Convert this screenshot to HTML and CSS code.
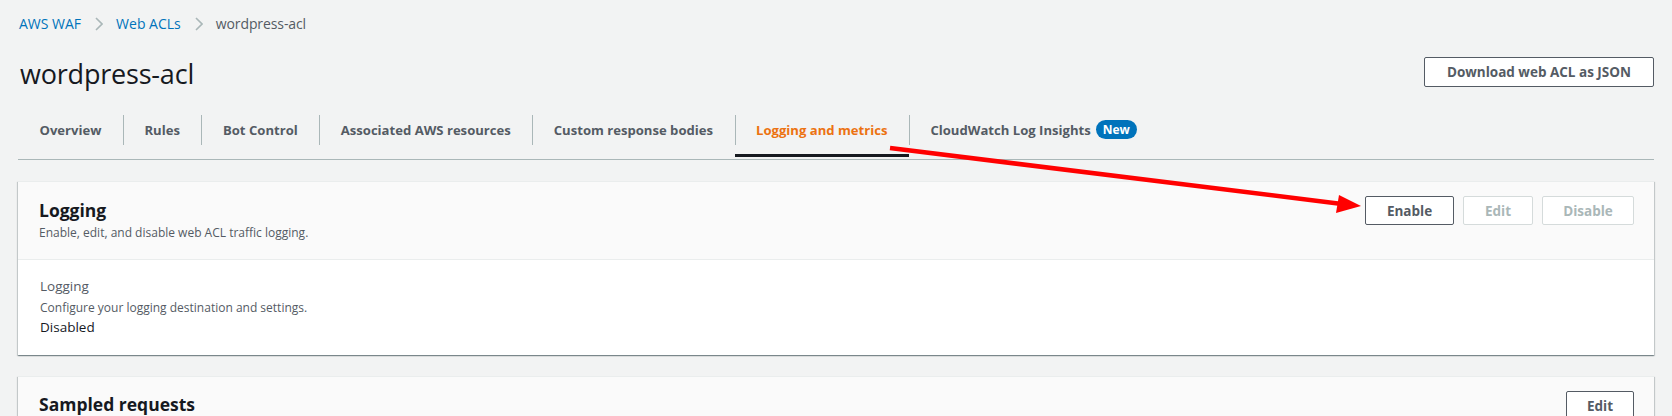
FILE: index.html
```html
<!DOCTYPE html>
<html lang="en">
<head>
<meta charset="utf-8">
<title>wordpress-acl</title>
<link rel="stylesheet" href="styles.css">
</head>
<body>
<div class="page">
  <nav class="breadcrumbs">
    <a class="crumb link">AWS WAF</a>
    <svg class="sep" width="8" height="14" viewBox="0 0 8 14" aria-hidden="true"><polyline points="1,1 7,7 1,13" fill="none" stroke="#aab7b8" stroke-width="1.6"/></svg>
    <a class="crumb link">Web ACLs</a>
    <svg class="sep" width="8" height="14" viewBox="0 0 8 14" aria-hidden="true"><polyline points="1,1 7,7 1,13" fill="none" stroke="#aab7b8" stroke-width="1.6"/></svg>
    <span class="crumb current">wordpress-acl</span>
  </nav>
  <header class="page-header">
    <h1 class="title">wordpress-acl</h1>
    <button class="btn btn-download">Download web ACL as JSON</button>
  </header>
  <div class="tabs">
    <div class="tab">Overview</div>
    <div class="tab">Rules</div>
    <div class="tab">Bot Control</div>
    <div class="tab">Associated AWS resources</div>
    <div class="tab">Custom response bodies</div>
    <div class="tab active">Logging and metrics</div>
    <div class="tab">CloudWatch Log Insights <span class="badge">New</span></div>
  </div>

  <section class="card">
    <div class="card-header">
      <div class="card-titles">
        <h2 class="card-title">Logging</h2>
        <p class="card-desc">Enable, edit, and disable web ACL traffic logging.</p>
      </div>
      <div class="actions">
        <button class="btn btn-sm">Enable</button>
        <button class="btn btn-sm disabled">Edit</button>
        <button class="btn btn-sm disabled">Disable</button>
      </div>
    </div>
    <div class="card-body">
      <div class="label">Logging</div>
      <div class="desc">Configure your logging destination and settings.</div>
      <div class="value">Disabled</div>
    </div>
  </section>

  <section class="card card-second">
    <div class="card-header">
      <div class="card-titles">
        <h2 class="card-title">Sampled requests</h2>
      </div>
      <div class="actions">
        <button class="btn btn-sm">Edit</button>
      </div>
    </div>
  </section>
</div>

<svg class="annot" width="1672" height="416" viewBox="0 0 1672 416" aria-hidden="true">
  <line x1="890" y1="148" x2="1342" y2="204" stroke="#ff0000" stroke-width="4.5" stroke-linecap="butt"/>
  <polygon points="1361,206 1339,195 1336,213" fill="#ff0000"/>
</svg>
</body>
</html>
```

FILE: styles.css
```css
* { box-sizing: border-box; }

html, body {
  margin: 0;
  padding: 0;
  background: #f2f3f3;
  font-family: "Open Sans", "Noto Sans", sans-serif;
  color: #16191f;
  overflow: hidden;
}

.page {
  padding: 0 18px;
  width: 1672px;
  height: 416px;
  overflow: hidden;
}

.breadcrumbs {
  display: flex;
  align-items: center;
  height: 48px;
  padding-left: 1px;
  font-size: 14px;
  padding-bottom: 2px;
}

.crumb.link { color: #0073bb; }
.crumb.current { color: #545b64; letter-spacing: -0.1px; }

.sep {
  margin: 1px 13px 0 14px;
  flex: none;
}

.page-header {
  display: flex;
  justify-content: space-between;
  align-items: center;
  height: 46px;
}

.title {
  margin: 5px 0 0 2px;
  font-size: 27px;
  font-weight: 400;
  letter-spacing: -0.2px;
  color: #16191f;
}

.btn {
  font-family: inherit;
  background: #ffffff;
  border: 1px solid #545b64;
  border-radius: 2px;
  color: #545b64;
  font-weight: 700;
  font-size: 13.5px;
  height: 29px;
  padding: 0 19px;
  cursor: pointer;
}

.btn-download {
  padding: 0 22px;
  margin-top: 1px;
  height: 30px;
}

.btn.disabled {
  border-color: #d5dbdb;
  color: #aab7b8;
}

.tabs {
  display: flex;
  align-items: stretch;
  margin-top: 11px;
  height: 55px;
  border-bottom: 1px solid #aab7b8;
  font-size: 13.1px;
  font-weight: 700;
  color: #545b64;
}

.tab {
  display: flex;
  align-items: center;
  padding: 0 21.5px;
  position: relative;
  border-bottom: 3px solid transparent;
  white-space: nowrap;
  height: 52px;
}

.tab::before {
  content: "";
  position: absolute;
  left: 0;
  top: 10px;
  height: 30px;
  border-left: 1px solid #aab7b8;
}

.tab:first-child::before { display: none; }

.tab.active {
  color: #ec7211;
  border-bottom-color: #16191f;
}

.badge {
  display: inline-block;
  background: #0073bb;
  color: #ffffff;
  font-size: 12px;
  font-weight: 700;
  border-radius: 10px;
  padding: 1px 7px;
  margin-left: 5px;
  line-height: 17px;
}

.card {
  margin-top: 21px;
  background: #ffffff;
  box-shadow: 0 1px 1px 0 rgba(0, 28, 36, 0.3), 1px 1px 1px 0 rgba(0, 28, 36, 0.15), -1px 1px 1px 0 rgba(0, 28, 36, 0.15);
  border-top: 1px solid #eaeded;
}

.card-header {
  display: flex;
  justify-content: space-between;
  align-items: flex-start;
  background: #fafafa;
  border-bottom: 1px solid #eaeded;
  padding: 13px 20px 15px 22px;
  min-height: 78px;
}

.card-title {
  margin: 2px 0 0 -1px;
  font-size: 17.5px;
  font-weight: 700;
  line-height: 26px;
  color: #16191f;
}

.card-desc {
  margin: 1px 0 0 -1px;
  font-size: 12px;
  color: #545b64;
  line-height: 18px;
}

.actions {
  display: flex;
  gap: 9px;
  margin-top: 1px;
}

.btn-sm {
  padding: 0 18px;
}

.actions .btn-sm:first-child { width: 89px; }
.actions .btn-sm:nth-child(2) { width: 70px; }
.actions .btn-sm:nth-child(3) { width: 92px; }

.card-body {
  padding: 16px 20px 20px 22px;
  height: 95px;
}

.label {
  font-size: 13.5px;
  color: #545b64;
  line-height: 20px;
}

.desc {
  font-size: 12px;
  color: #545b64;
  line-height: 20px;
  margin-top: 2px;
}

.value {
  font-size: 13.5px;
  color: #16191f;
  line-height: 18px;
}

.card-second .card-title {
  margin-top: 1px;
}

.card-second .actions .btn-sm:first-child { width: 68px; }

.annot {
  position: absolute;
  left: 0;
  top: 0;
  pointer-events: none;
}
```
